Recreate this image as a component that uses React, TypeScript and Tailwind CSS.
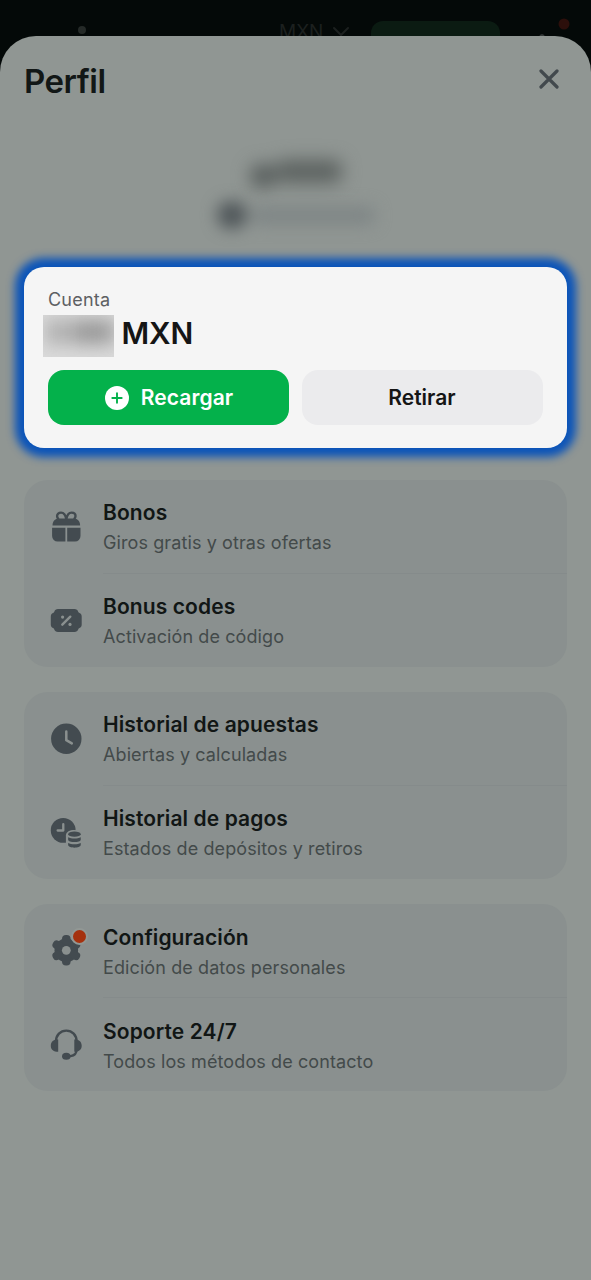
import { ReactNode } from "react";

const ink = "#434b50";
const card = "#8a908f";

function GiftIcon() {
  return (
    <svg width="32" height="32" viewBox="0 0 32 32" fill="none">
      <path d="M16.300 8.500C15.600 3.800 13.600 1.600 11 1.600c-2.300 0-3.900 1.400-3.900 3.400 0 1 .3 1.800 1 2.600M16.300 8.500C17 3.800 19 1.600 21.600 1.600c2.300 0 3.900 1.400 3.900 3.400 0 1-.3 1.800-1 2.600" stroke={ink} strokeWidth="2.400" strokeLinecap="round" />
      <path d="M2.500 14.400c0-4 2.300-7 6.300-7h15c4 0 6.300 3 6.300 7H2.500Z" fill={ink} />
      <path d="M2.100 16.700h13.300v13.900H7.600a5.500 5.500 0 0 1-5.500-5.500v-8.400ZM17.200 16.700h13.300v8.400a5.500 5.500 0 0 1-5.500 5.500h-7.800V16.700Z" fill={ink} />
    </svg>
  );
}

function CouponIcon() {
  return (
    <svg width="32" height="32" viewBox="0 0 32 32" fill="none">
      <path d="M8 4.100h16.500c1.900 0 3.200 1 3.700 2.600.2.700.6 1.100 1.300 1.400 1.400.6 2.200 1.800 2.200 3.300v8.400c0 1.500-.8 2.700-2.200 3.300-.7.300-1.100.7-1.300 1.400-.5 1.600-1.800 2.500-3.700 2.500H8c-1.900 0-3.200-.9-3.700-2.500-.2-.7-.6-1.100-1.300-1.400-1.400-.6-2.200-1.800-2.200-3.300v-8.400c0-1.500.8-2.700 2.200-3.300.7-.3 1.100-.7 1.300-1.400.5-1.600 1.800-2.600 3.700-2.600Z" fill={ink} />
      <path d="m12.300 19.700 8-8" stroke={card} strokeWidth="2.400" strokeLinecap="round" />
      <circle cx="12.600" cy="12.100" r="1.600" fill={card} />
      <circle cx="20" cy="19.400" r="1.600" fill={card} />
    </svg>
  );
}

function ClockIcon() {
  return (
    <svg width="32" height="32" viewBox="0 0 32 32" fill="none">
      <circle cx="16.300" cy="15.700" r="15.200" fill={ink} />
      <path d="M16.300 8.500v8.700l5.500 3.200" stroke={card} strokeWidth="2.500" strokeLinecap="round" strokeLinejoin="round" />
    </svg>
  );
}

function PaymentsIcon() {
  return (
    <svg width="33" height="32" viewBox="0 0 33 32" fill="none">
      <circle cx="13.600" cy="13.300" r="12.800" fill={ink} />
      <path d="M13.700 7v6.400H7.900" stroke={card} strokeWidth="2.400" strokeLinecap="round" strokeLinejoin="round" />
      <path d="M16.400 32V18.500c0-3.700 4-5.600 8.800-5.600 4.700 0 8 1.900 8 5.600V32Z" fill={card} />
      <ellipse cx="25.200" cy="17.200" rx="6.500" ry="2.700" fill={ink} />
      <path d="M18.700 20.300c3.300 1.900 9.700 1.900 13 0v2.600c0 3.300-13 3.300-13 0v-2.600ZM18.700 26.300c3.300 1.900 9.700 1.900 13 0v2.200c0 3.500-13 3.500-13 0v-2.200Z" fill={ink} />
    </svg>
  );
}

function GearIcon() {
  return (
    <svg width="32" height="32" viewBox="0 0 32 32" fill="none">
      <g fill={ink}>
        <circle cx="16.300" cy="15.300" r="11.800" />
        {[0, 60, 120, 180, 240, 300].map((a) => (
          <rect key={a} x="12" y="0.100" width="8.600" height="12" rx="4" transform={`rotate(${a} 16.300 15.300)`} />
        ))}
      </g>
      <circle cx="16.300" cy="15.300" r="4.400" fill={card} />
    </svg>
  );
}

function HeadsetIcon() {
  return (
    <svg width="32" height="32" viewBox="0 0 32 32" fill="none">
      <path d="M6 12.500c0-6.500 4.400-10.900 10.300-10.900s10.300 4.400 10.300 10.900M26.600 20.500c0 3.700-2.200 6-6 6.600L17 27.600" stroke={ink} strokeWidth="2.400" strokeLinecap="round" />
      <path d="M8.200 10.600v12.200c-4.400 0-7.400-1.900-7.400-6.100s3-6.100 7.400-6.100ZM24.300 10.600v12.200c4.400 0 7.400-1.900 7.400-6.100s-3-6.100-7.400-6.100Z" fill={ink} />
      <ellipse cx="16.300" cy="27.300" rx="4.300" ry="3.500" fill={ink} />
    </svg>
  );
}

interface RowData {
  title: string;
  subtitle: string;
  icon: ReactNode;
  alert?: boolean;
}

const groups: RowData[][] = [
  [
    { title: "Bonos", subtitle: "Giros gratis y otras ofertas", icon: <GiftIcon /> },
    { title: "Bonus codes", subtitle: "Activación de código", icon: <CouponIcon /> },
  ],
  [
    { title: "Historial de apuestas", subtitle: "Abiertas y calculadas", icon: <ClockIcon /> },
    { title: "Historial de pagos", subtitle: "Estados de depósitos y retiros", icon: <PaymentsIcon /> },
  ],
  [
    { title: "Configuración", subtitle: "Edición de datos personales", icon: <GearIcon />, alert: true },
    { title: "Soporte 24/7", subtitle: "Todos los métodos de contacto", icon: <HeadsetIcon /> },
  ],
];

function MenuRow({ row, divided }: { row: RowData; divided: boolean }) {
  return (
    <div className="flex h-[94px] items-center pl-[26px]">
      <div className="relative flex w-8 shrink-0">
        {row.icon}
        {row.alert && (
          <span className="absolute top-[-7px] left-[21px] size-[17px] rounded-full border-2 border-[#929895] bg-[#a5310e]" />
        )}
      </div>
      <div className={`ml-[21px] flex h-full flex-1 flex-col pt-[19.5px] ${divided ? "border-b border-[#858b8b]" : ""}`}>
        <span className="text-[21px] leading-7 font-semibold tracking-[0.1px] text-[#111615]">{row.title}</span>
        <span className="mt-[2px] text-[18px] leading-7 tracking-[0.1px] text-[#434a4a]">{row.subtitle}</span>
      </div>
    </div>
  );
}

export default function App() {
  return (
    <div className="flex h-[1280px] w-[591px] flex-col overflow-hidden bg-[#040908] font-['Inter',sans-serif]">
      <header className="flex h-9 shrink-0 items-start">
        <span className="mt-[26px] ml-[78px] size-2 rounded-full bg-[#252a28]" />
        <span className="mt-5 ml-[193px] w-[47px] text-[19px] leading-6 text-[#1c201f]">MXN</span>
        <svg className="mt-[26px] ml-[6px]" width="18" height="14" viewBox="0 0 18 14" fill="none">
          <path d="m2 2 7 7 7-7" stroke="#1c201f" strokeWidth="2" strokeLinecap="round" />
        </svg>
        <span className="mt-[21px] ml-[21px] h-10 w-[129px] rounded-xl bg-[#0b1b12]" />
        <svg className="mt-[16px] ml-[30px]" width="42" height="24" viewBox="0 0 42 24">
          <circle cx="34" cy="8" r="5.500" fill="#2c0f0b" />
          <path d="M9.500 20c0-2.500 5-2.500 5 0Z" fill="#343938" />
        </svg>
      </header>
      <main className="relative flex flex-1 flex-col rounded-t-[36px] bg-[#909693] px-6">
        <div className="flex items-start justify-between pt-[25px]">
          <h1 className="text-[33px] leading-10 font-semibold tracking-[-0.5px] text-[#121716]">Perfil</h1>
          <svg className="mt-2 mr-2" width="20" height="20" viewBox="0 0 20 20" fill="none">
            <path d="m2 2 16 16M18 2 2 18" stroke="#42494d" strokeWidth="3.200" strokeLinecap="round" />
          </svg>
        </div>
        <div className="flex h-[166px] flex-col items-center pt-[59px]">
          <div className="flex h-6 w-[92px] items-start blur-[9px]">
            <span className="mt-1 h-6 w-[26px] rounded-xl bg-[#565c5b]" />
            <span className="h-[23px] flex-1 rounded-lg bg-[#5c6260]" />
          </div>
          <div className="mt-[17px] flex w-[158px] items-center blur-[8px]">
            <span className="h-7 w-[30px] rounded-full bg-[#50575a]" />
            <span className="ml-1 h-[19px] flex-1 rounded-lg bg-[#7f8686]" />
          </div>
        </div>
        <section className="h-[181px] shrink-0 rounded-[20px] bg-[#f5f5f5] px-6 pt-[19px] shadow-[0_0_8px_8.5px_#0b54b9]">
          <p className="text-[18px] leading-7 tracking-[0.2px] text-[#5d6063]">Cuenta</p>
          <div className="mt-px -ml-[5px] flex h-[42px] items-center">
            <div className="h-[42px] w-[71px] overflow-hidden bg-[#dadada]">
              <div className="flex h-full gap-1 pt-[5px] blur-[9px]">
                <span className="ml-1 h-6 w-5 bg-[#aaaaaa]" />
                <span className="h-6 flex-1 bg-[#989898]" />
              </div>
            </div>
            <span className="-mt-[6px] ml-[7.5px] text-[30px] leading-9 font-semibold tracking-[-0.1px] text-[#151515]">MXN</span>
          </div>
          <div className="mt-[13px] grid grid-cols-2 gap-[13px]">
            <button className="flex h-[54.5px] items-center justify-center gap-3 rounded-[16px] bg-[#04b14b] pt-px pl-px text-[21px] font-semibold tracking-[0.1px] text-white">
              <svg width="24" height="24" viewBox="0 0 24 24">
                <circle cx="12" cy="12" r="12" fill="white" />
                <path d="M12 7.300v9.400M7.300 12h9.400" stroke="#04b14b" strokeWidth="1.900" strokeLinecap="round" />
              </svg>
              <span>Recargar</span>
            </button>
            <button className="h-[54.5px] rounded-[16px] bg-[#ebebed] pt-px pr-px text-[21px] font-semibold text-[#151515]">Retirar</button>
          </div>
        </section>
        <div className="mt-[31.5px] flex flex-col gap-[25px]">
          {groups.map((rows) => (
            <section key={rows[0].title} className="h-[187.300px] rounded-[24px] bg-[#8a908f]">
              {rows.map((row, i) => (
                <MenuRow key={row.title} row={row} divided={i === 0} />
              ))}
            </section>
          ))}
        </div>
      </main>
    </div>
  );
}
